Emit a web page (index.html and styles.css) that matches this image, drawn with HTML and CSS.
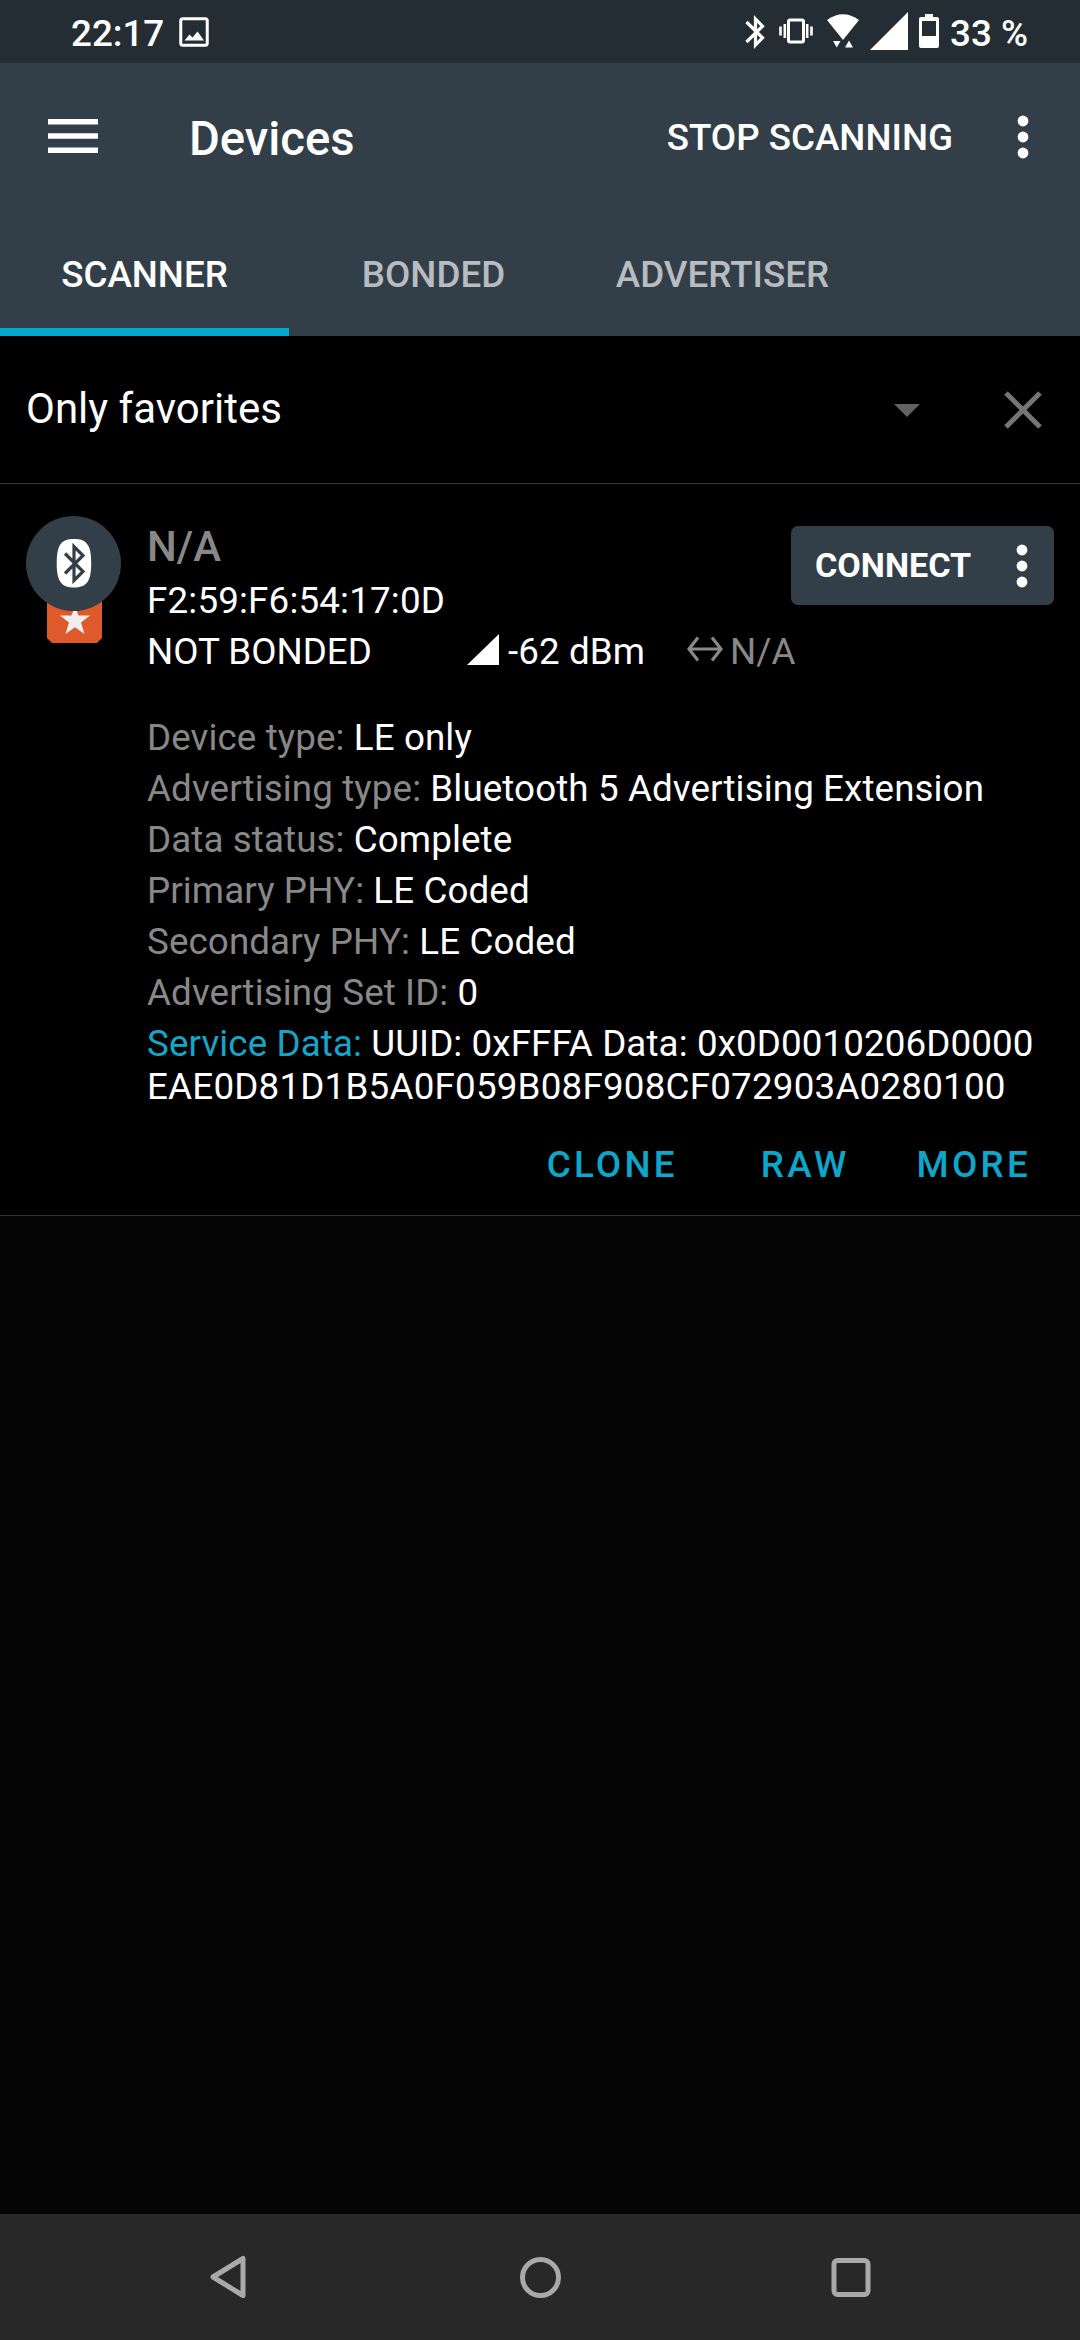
FILE: index.html
```html
<!DOCTYPE html>
<html lang="en">
<head>
<meta charset="utf-8">
<title>Devices</title>
<link rel="stylesheet" href="styles.css">
</head>
<body>
<div class="screen">
  <div class="statusbar">
    <span class="clock">22:17</span>
    <svg class="picture" width="30" height="30" viewBox="0 0 30 30"><rect x="1.75" y="1.75" width="26.5" height="26.5" rx="2" fill="none" stroke="#fff" stroke-width="3"/><path d="M5.5 23.5L10.5 17.5L13.5 20.5L18.500 14.500L25 23.500Z" fill="#fff"/></svg>
    <div class="indicators">
      <svg class="bt" width="20" height="34" viewBox="0 0 20 34"><path d="M1.500 7L17.500 22.800L10.500 30V4L17.500 11.200L1.500 27" fill="none" stroke="#fff" stroke-width="3.200"/></svg>
      <svg class="vibrate" width="34" height="26" viewBox="0 0 34 26"><rect x="9.500" y="2" width="15" height="22" rx="1.500" fill="none" stroke="#fff" stroke-width="3"/><path d="M1.500 8.500V17.500M5.800 6V20M32.500 8.500V17.500M28.200 6V20" stroke="#fff" stroke-width="2.600"/></svg>
      <svg class="wifi" width="32" height="34" viewBox="0 0 32 34"><path d="M0 6Q16 -5.500 32 6L16 26Z" fill="#fff"/><path d="M6 27H13.500L9.800 33.500ZM18 33.500H26L22 26.500Z" fill="#fff"/></svg>
      <svg class="cell" width="38" height="38" viewBox="0 0 38 38"><path d="M0 38L38 0V38Z" fill="#fff"/></svg>
      <svg class="battery" width="20" height="34" viewBox="0 0 20 34"><path fill-rule="evenodd" d="M6 0H14V3H18Q20 3 20 5V32Q20 34 18 34H2Q0 34 0 32V5Q0 3 2 3H6ZM3 7V22H17V7Z" fill="#fff"/></svg>
      <span>33 %</span>
    </div>
  </div>

  <header class="appbar">
    <div class="toolbar">
      <svg class="menu" width="50" height="34" viewBox="0 0 50 34"><path d="M0 2.800H50M0 17H50M0 31.200H50" stroke="#fff" stroke-width="5.500"/></svg>
      <h1 class="title">Devices</h1>
      <span class="action">STOP SCANNING</span>
      <svg class="dots" width="12" height="44" viewBox="0 0 12 44"><g fill="#fff"><circle cx="6" cy="6" r="5.400"/><circle cx="6" cy="22" r="5.400"/><circle cx="6" cy="38" r="5.400"/></g></svg>
    </div>
    <nav class="tabs">
      <span class="tab active">SCANNER</span>
      <span class="tab">BONDED</span>
      <span class="tab">ADVERTISER</span>
    </nav>
  </header>

  <div class="filter">
    <span class="filter-text">Only favorites</span>
    <svg class="caret" width="26" height="13" viewBox="0 0 26 13"><path d="M0 0H26L13 13Z" fill="#626262"/></svg>
    <svg class="close" width="38" height="38" viewBox="0 0 38 38"><path d="M2 2L36 36M36 2L2 36" stroke="#757575" stroke-width="5"/></svg>
  </div>

  <article class="device">
    <svg class="avatar" width="96" height="128" viewBox="0 0 96 128">
      <path d="M21 80H76V122L71 127H26L21 122Z" fill="#de5a2b"/>
      <path d="M49 90L52.500 99.500H64L55 106.500L58.500 118L49 111.200L39.500 118L43 106.500L34 99.500H45.500Z" fill="#eee"/>
      <circle cx="47.500" cy="47.500" r="47.500" fill="#333f48"/>
      <path d="M48 23C60 23 65.200 28 65.200 47.200S60 71.400 48 71.400S30.700 66.500 30.700 47.200S36 23 48 23Z" fill="#fff"/>
      <path d="M39 37.500L57 55.500L48 64.500V30.500L57 39.500L39 57.500" fill="none" stroke="#333f48" stroke-width="3.200"/>
    </svg>
    <div class="body">
      <div class="head">
        <div class="identity">
          <div class="name">N/A</div>
          <div class="address">F2:59:F6:54:17:0D</div>
        </div>
        <div class="connect">
          <span>CONNECT</span>
          <svg width="12" height="44" viewBox="0 0 12 44"><g fill="#fff"><circle cx="6" cy="6" r="5.400"/><circle cx="6" cy="22" r="5.400"/><circle cx="6" cy="38" r="5.400"/></g></svg>
        </div>
      </div>
      <div class="state">
        <span class="bond">NOT BONDED</span>
        <svg class="rssi-icon" width="32" height="31" viewBox="0 0 32 31"><path d="M0 31L32 0V31Z" fill="#fff"/></svg>
        <span class="rssi">-62 dBm</span>
        <svg class="interval-icon" width="36" height="26" viewBox="0 0 36 26"><path d="M2 13H34M11 1.500L2 13L11 24.500M25 1.500L34 13L25 24.500" fill="none" stroke="#888" stroke-width="3.200"/></svg>
        <span class="interval">N/A</span>
      </div>
      <div class="details">
        <div><span class="label">Device type:</span> LE only</div>
        <div><span class="label">Advertising type:</span> Bluetooth 5 Advertising Extension</div>
        <div><span class="label">Data status:</span> Complete</div>
        <div><span class="label">Primary PHY:</span> LE Coded</div>
        <div><span class="label">Secondary PHY:</span> LE Coded</div>
        <div><span class="label">Advertising Set ID:</span> 0</div>
        <div><span class="label link">Service Data:</span> UUID: 0xFFFA Data: 0x0D0010206D0000<br><span class="hex">EAE0D81D1B5A0F059B08F908CF072903A0280100</span></div>
      </div>
      <div class="actions">
        <span class="clone">CLONE</span>
        <span class="raw">RAW</span>
        <span class="more">MORE</span>
      </div>
    </div>
  </article>

  <div class="navbar">
    <svg width="44" height="44" viewBox="0 0 44 44"><path d="M36 3.500V40.500L6 22Z" fill="none" stroke="#a9a9a9" stroke-width="5" stroke-linejoin="round"/></svg>
    <svg width="44" height="44" viewBox="0 0 44 44"><circle cx="22.500" cy="22.500" r="18" fill="none" stroke="#a9a9a9" stroke-width="5"/></svg>
    <svg width="44" height="44" viewBox="0 0 44 44"><rect x="5" y="5.500" width="34" height="34" rx="3.500" fill="none" stroke="#a9a9a9" stroke-width="5"/></svg>
  </div>
</div>
</body>
</html>
```
FILE: styles.css
```css
* { box-sizing: border-box; }
body {
  margin: 0;
  background: #040404;
  color: #fff;
  font-family: Roboto, "Liberation Sans", sans-serif;
  font-size: 36.75px;
  line-height: 43px;
}
svg { display: block; flex: none; }
.screen {
  width: 1080px;
  height: 2340px;
  display: flex;
  flex-direction: column;
  white-space: nowrap;
}
.statusbar {
  height: 63px;
  padding: 0 52px 0 71px;
  background: #252d34;
  display: flex;
  align-items: flex-start;
  font-weight: 500;
}
.clock, .indicators span { margin-top: 12px; }
.picture { margin: 17px 0 0 15px; }
.indicators { margin-left: auto; display: flex; align-items: flex-start; }
.vibrate { margin: 18px 0 0 14px; }
.bt { margin-top: 15px; }
.wifi { margin: 14px 0 0 14px; }
.cell { margin: 12px 0 0 11px; }
.battery { margin: 14px 11px 0 11px; }

.appbar { height: 273px; background: #333f48; }
.toolbar { height: 147px; padding: 0 51px 0 48px; display: flex; align-items: center; }
.menu { margin-bottom: 1px; }
.title { margin: 5px auto 0 91px; font-size: 47.25px; font-weight: 500; line-height: 56px; }
.action { margin: 2px 64px 0 0; font-weight: 500; }
.tabs { height: 126px; display: flex; }
.tab {
  width: 289px;
  padding-top: 43px;
  border-bottom: 8px solid transparent;
  text-align: center;
  font-weight: 500;
  color: #b8bcc0;
}
.tab.active { color: #fff; border-color: #00a9ce; }

.filter {
  height: 148px;
  padding: 0 38px 0 26px;
  display: flex;
  align-items: center;
  background: #000;
  border-bottom: 1px solid #363636;
  font-size: 42px;
}
.filter-text { margin: 0 auto 2px 0; }
.caret { margin: 2px 84px 0 0; }

.device {
  height: 732px;
  padding: 32px 26px 0 26px;
  display: flex;
  background: #000;
  border-bottom: 1px solid #333;
}
.avatar { margin-right: 25px; }
.body { flex: 1; }
.head { height: 114px; display: flex; justify-content: space-between; }
.name { margin-top: 9px; font-size: 42px; line-height: 43px; font-weight: 500; color: #888; }
.address { margin-top: 11px; letter-spacing: 0.17px; }
.connect {
  width: 263px;
  height: 79px;
  margin-top: 10px;
  padding: 0 26px 0 24px;
  display: flex;
  align-items: center;
  justify-content: space-between;
  background: #333f48;
  border-radius: 7px;
  font-size: 34.125px;
  font-weight: 700;
}
.state { height: 43px; display: flex; }
.bond { width: 320px; }
.rssi-icon { margin: 4px 9px 0 0; }
.rssi { width: 179px; letter-spacing: 0.1px; }
.interval-icon { margin: 6px 7px 0 0; }
.interval, .label { color: #888; }
.details { margin-top: 43px; display: flex; flex-direction: column; gap: 8px; letter-spacing: 0.1px; }
.hex { letter-spacing: 0.21px; }
.label.link { color: #16a5c8; }
.actions {
  margin-top: 35px;
  display: flex;
  justify-content: flex-end;
  padding-right: 23px;
  color: #0ca7cb;
  font-weight: 500;
  letter-spacing: 3.28px;
}
.raw { margin-left: 83px; }
.more { margin-left: 67px; }

.navbar {
  height: 126px;
  margin-top: auto;
  padding: 0 207px;
  display: flex;
  align-items: center;
  justify-content: space-between;
  background: #282828;
}
```
